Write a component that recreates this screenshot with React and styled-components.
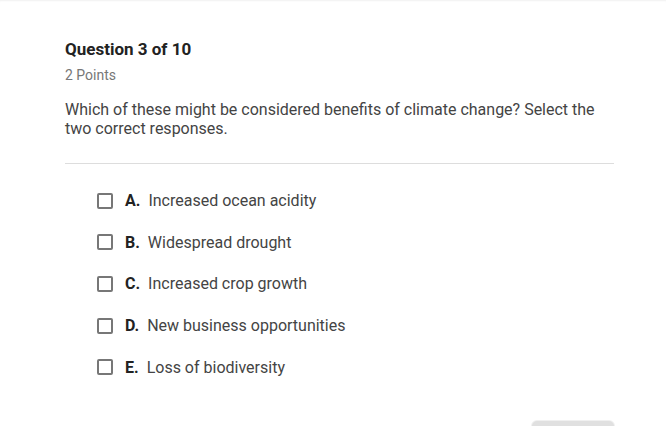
import React from 'react';
import styled, { createGlobalStyle } from 'styled-components';

const GlobalStyle = createGlobalStyle`
  body {
    margin: 0;
    background: #fff;
    font-family: Roboto, "Liberation Sans", sans-serif;
  }
`;

const Page = styled.div`
  width: 666px;
  height: 426px;
  overflow: hidden;
  box-shadow: inset 0 2px 2px -1px rgba(0, 0, 0, 0.06);
`;

const Card = styled.div`
  padding: 38px 52px 0 65px;
`;

const Title = styled.h2`
  margin: 0;
  font-size: 17px;
  font-weight: 700;
  color: #222;
  line-height: 22px;
`;

const Points = styled.div`
  margin-top: 7px;
  font-size: 14px;
  color: #777;
  line-height: 16px;
`;

const Prompt = styled.p`
  margin: 17px 0 0;
  font-size: 16px;
  line-height: 19px;
  color: #444;
`;

const Divider = styled.hr`
  margin: 25px 0 0;
  border: 0;
  border-top: 1px solid #ddd;
`;

const Options = styled.ul`
  list-style: none;
  margin: 26px 0 0;
  padding: 0 0 0 32px;
  display: flex;
  flex-direction: column;
  gap: 20.7px;
`;

const Option = styled.li`
  display: flex;
  align-items: center;
  height: 21px;
  font-size: 16px;
  color: #444;
`;

const Box = styled.span`
  width: 12px;
  height: 12px;
  border: 2px solid #777;
  border-radius: 2px;
  margin-right: 12px;
  flex-shrink: 0;
`;

const Letter = styled.b`
  font-weight: 700;
  color: #222;
  margin-right: 8px;
`;

const Footer = styled.div`
  display: flex;
  justify-content: flex-end;
  padding-right: 52px;
  margin-top: 43px;
`;

const Button = styled.button`
  width: 82px;
  height: 30px;
  border: 0;
  border-radius: 5px;
  background: #e0e0e0;
  box-shadow: 0 0 0 1px #f0f0f0;
`;

const answers = [
  ['A.', 'Increased ocean acidity'],
  ['B.', 'Widespread drought'],
  ['C.', 'Increased crop growth'],
  ['D.', 'New business opportunities'],
  ['E.', 'Loss of biodiversity'],
];

export default function App() {
  return (
    <Page>
      <GlobalStyle />
      <Card>
        <Title>Question 3 of 10</Title>
        <Points>2 Points</Points>
        <Prompt>
          Which of these might be considered benefits of climate change? Select the
          two correct responses.
        </Prompt>
        <Divider />
        <Options>
          {answers.map(([letter, text]) => (
            <Option key={letter}>
              <Box />
              <Letter>{letter}</Letter>
              {text}
            </Option>
          ))}
        </Options>
      </Card>
      <Footer>
        <Button />
      </Footer>
    </Page>
  );
}
